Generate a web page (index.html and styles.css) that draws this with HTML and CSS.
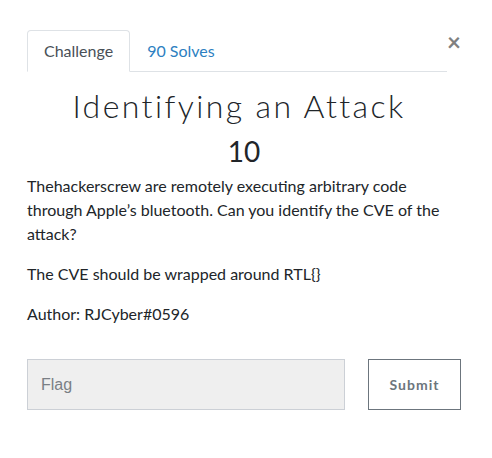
FILE: index.html
```html
<!DOCTYPE html>
<html>
<head>
<meta charset="utf-8">
<link rel="stylesheet" href="styles.css">
</head>
<body>
<div class="modal">
  <div class="top">
    <ul class="tabs">
      <li class="tab active">Challenge</li>
      <li class="tab link">90 Solves</li>
    </ul>
    <button class="close" aria-label="Close">&times;</button>
  </div>
  <h2 class="title">Identifying an Attack</h2>
  <h3 class="value">10</h3>
  <div class="desc">
    <p>Thehackerscrew are remotely executing arbitrary code through Apple’s bluetooth. Can you identify the CVE of the attack?</p>
    <p>The CVE should be wrapped around RTL{}</p>
    <p>Author: RJCyber#0596</p>
  </div>
  <form class="submit-row">
    <input class="flag" type="text" placeholder="Flag">
    <button class="btn" type="button">Submit</button>
  </form>
</div>
</body>
</html>
```
FILE: styles.css
```css
html, body {
  margin: 0;
  padding: 0;
  background: #fff;
}
body {
  font-family: Lato, "Noto Sans", sans-serif;
  color: #212529;
}
.modal {
  padding: 30px 31px 0 27px;
}
.top {
  display: flex;
  align-items: flex-start;
}
.tabs {
  list-style: none;
  margin: 0;
  padding: 0;
  display: flex;
  flex: 0 0 420px;
  border-bottom: 1px solid #dee2e6;
}
.tab {
  font-size: 16px;
  line-height: 24px;
  padding: 8px 16px;
  margin-bottom: -1px;
  border: 1px solid transparent;
  border-radius: 4px 4px 0 0;
}
.tab.active {
  color: #495057;
  border-color: #dee2e6 #dee2e6 #fff;
  background: #fff;
}
.tab.link {
  color: #2d7fc1;
}
.close {
  margin: 0 0 0 auto;
  padding: 0;
  border: 0;
  background: none;
  font-family: Lato, sans-serif;
  font-size: 24px;
  line-height: 24px;
  font-weight: 700;
  color: #808080;
  margin-right: 1px;
}
.title {
  margin: 14px 0 7px;
  padding-right: 10px;
  text-align: center;
  font-weight: 300;
  font-size: 32px;
  line-height: 40px;
  letter-spacing: 2.4px;
  color: #212529;
}
.value {
  margin: 0;
  text-align: center;
  font-weight: 400;
  font-size: 28px;
  line-height: 36px;
}
.desc {
  margin-top: 5px;
  font-size: 16px;
  line-height: 24px;
}
.desc p {
  margin: 0 0 16px;
}
.submit-row {
  display: flex;
  align-items: stretch;
  margin-top: 33px;
}
.flag {
  width: 318px;
  height: 51px;
  box-sizing: border-box;
  border: 1px solid #ccd0d6;
  background: #efefef;
  font-family: "Liberation Sans", Arial, sans-serif;
  font-size: 16px;
  padding: 0 13px;
  color: #495057;
}
.flag::placeholder {
  color: #7a7f85;
}
.btn {
  margin-left: 23px;
  width: 93px;
  height: 51px;
  box-sizing: border-box;
  border: 1px solid #6c757d;
  background: #fff;
  color: #6c757d;
  font-family: Lato, sans-serif;
  font-weight: 700;
  font-size: 14px;
  letter-spacing: 1px;
}
```
